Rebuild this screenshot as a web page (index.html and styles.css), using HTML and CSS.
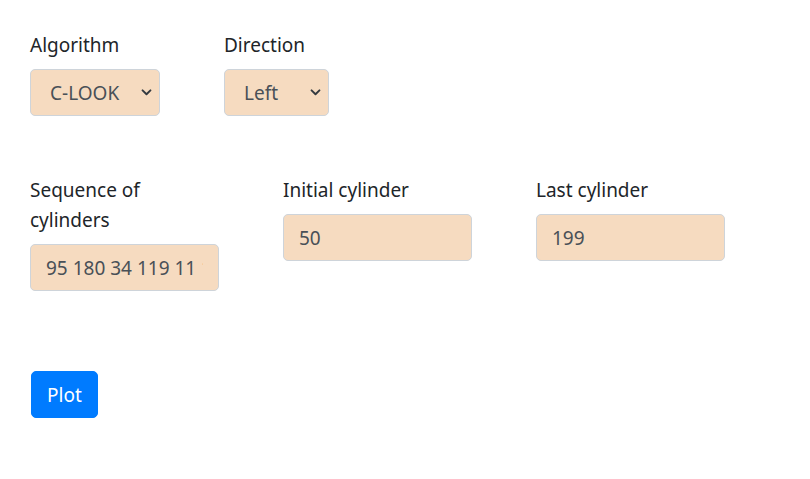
FILE: index.html
```html
<!DOCTYPE html>
<html>
<head>
<meta charset="utf-8">
<link rel="stylesheet" href="styles.css">
</head>
<body>
<div class="page">
  <div class="row row-top">
    <div class="field">
      <label class="label">Algorithm</label>
      <select class="select select-algo">
        <option>FCFS</option>
        <option>SSTF</option>
        <option>SCAN</option>
        <option>C-SCAN</option>
        <option>LOOK</option>
        <option selected>C-LOOK</option>
      </select>
    </div>
    <div class="field">
      <label class="label">Direction</label>
      <select class="select select-dir">
        <option selected>Left</option>
        <option>Right</option>
      </select>
    </div>
  </div>
  <div class="row row-inputs">
    <div class="field wide">
      <label class="label">Sequence of cylinders</label>
      <input class="input" type="text" value="95 180 34 119 11 123 62 64">
    </div>
    <div class="field wide">
      <label class="label">Initial cylinder</label>
      <input class="input" type="text" value="50">
    </div>
    <div class="field wide">
      <label class="label">Last cylinder</label>
      <input class="input" type="text" value="199">
    </div>
  </div>
  <button class="btn">Plot</button>
</div>
</body>
</html>
```
FILE: styles.css
```css
html, body {
  margin: 0;
  padding: 0;
  background: #ffffff;
}

.page {
  padding: 29px 30px 0 30px;
  font-family: "Noto Sans", "Open Sans", sans-serif;
  font-size: 19px;
  line-height: 30px;
  color: #212529;
}

.row {
  display: flex;
  gap: 64px;
  align-items: flex-start;
}

.row-top {
  margin-bottom: 58px;
}

.row-inputs {
  margin-bottom: 80px;
}

.field {
  display: flex;
  flex-direction: column;
}

.field.wide {
  width: 189px;
}

.label {
  display: block;
  padding-top: 1px;
  margin-bottom: 9px;
}

.select,
.input {
  box-sizing: border-box;
  height: 47px;
  font-family: inherit;
  font-size: 19px;
  line-height: 30px;
  color: #495057;
  background-color: #f6dbc0;
  border: 1px solid #ced4da;
  border-radius: 5px;
  margin: 0;
  outline: none;
}

.select {
  -webkit-appearance: none;
  appearance: none;
  padding: 8px 30px 7px 19px;
  background-image: url("data:image/svg+xml;utf8,<svg xmlns='http://www.w3.org/2000/svg' width='12' height='8' viewBox='0 0 12 8'><path d='M1.5 1.5 L6 6 L10.5 1.5' fill='none' stroke='%23343a40' stroke-width='2.2' stroke-linecap='round' stroke-linejoin='round'/></svg>");
  background-repeat: no-repeat;
  background-position: right 7px center;
  background-size: 11px 7px;
}

.select-algo {
  width: 130px;
}

.select-dir {
  width: 105px;
}

.input {
  width: 189px;
  padding: 8px 15px 7px 15px;
}

.btn {
  box-sizing: border-box;
  height: 47px;
  padding: 8px 15px 7px 15px;
  margin-left: 1px;
  font-family: inherit;
  font-size: 19px;
  line-height: 30px;
  color: #ffffff;
  background: #007bff;
  border: 1px solid #007bff;
  border-radius: 5px;
}
```
